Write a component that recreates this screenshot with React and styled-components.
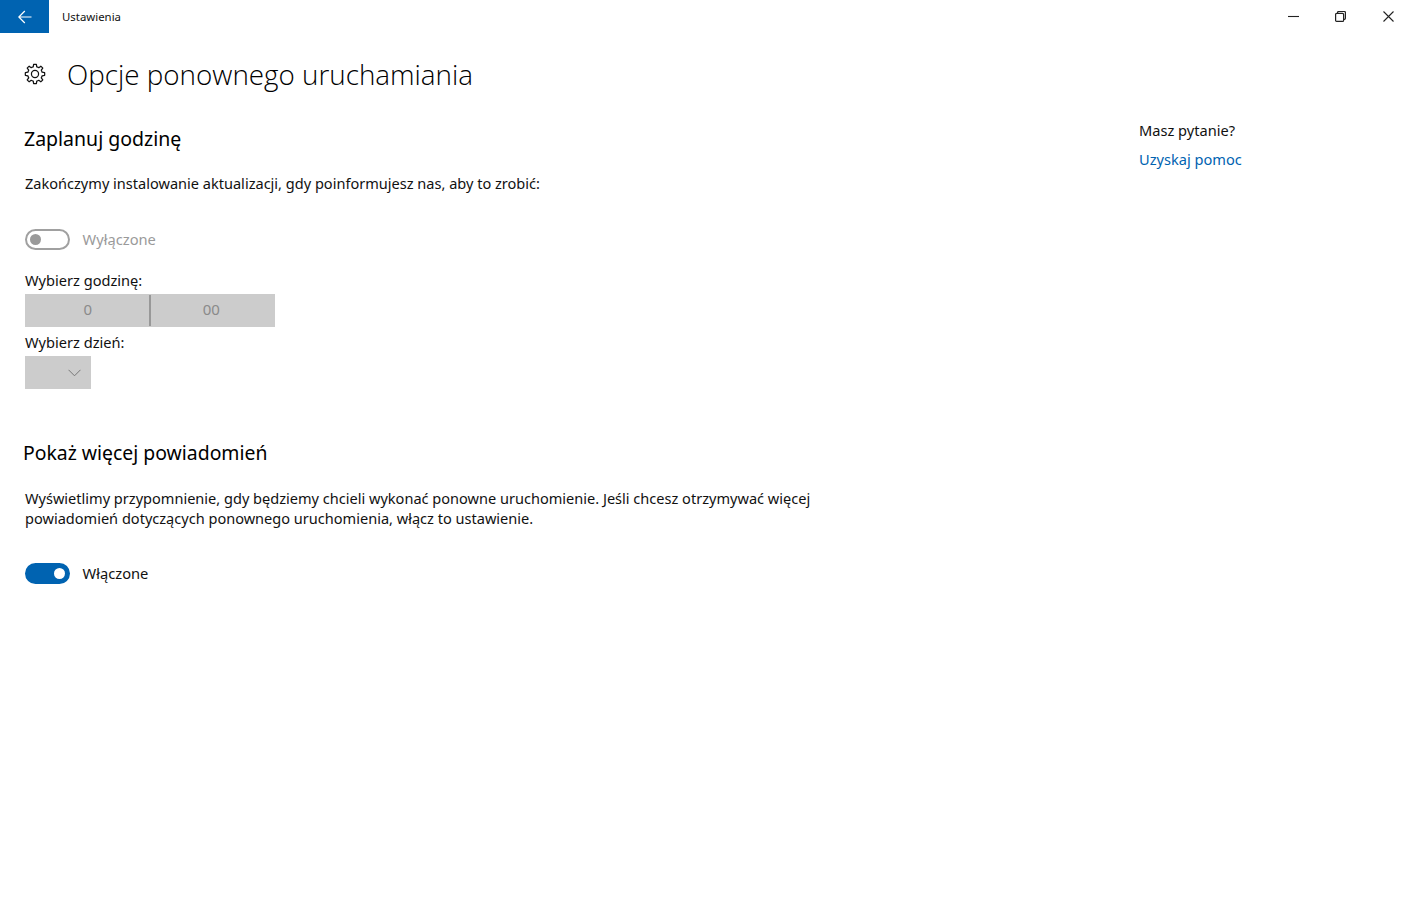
import React from "react";
import styled, { createGlobalStyle } from "styled-components";

const Global = createGlobalStyle`
  html, body { margin: 0; padding: 0; background: #fff; }
  body { font-family: "Noto Sans", "Open Sans", "Liberation Sans", sans-serif; color: #000; }
`;

const Window = styled.div`
  width: 1412px; height: 900px; display: flex; flex-direction: column; overflow: hidden; background: #fff;
`;
const TitleBar = styled.header`
  height: 33px; display: flex; align-items: center; flex: none;
`;
const BackButton = styled.div`
  width: 49px; height: 33px; background: #0063b1; display: flex; align-items: center; justify-content: center;
  svg { display: block; }
`;
const AppName = styled.span`
  font-size: 11.4px; margin-left: 13px; color: #111; flex: 1;
`;
const WinControls = styled.div`
  display: flex;
`;
const WinButton = styled.div`
  width: 47.5px; height: 33px; display: flex; align-items: center; justify-content: center;
`;
const Body = styled.div`
  flex: 1; display: flex; justify-content: space-between;
`;
const Main = styled.main`
  padding-left: 25px; display: flex; flex-direction: column; width: 820px;
`;
const PageHeading = styled.div`
  display: flex; align-items: center; margin-top: 20px; height: 42px;
`;
const GearWrap = styled.div`
  width: 42px; margin-left: -1px; display: flex; align-items: center; svg { display: block; }
`;
const PageTitle = styled.h1`
  margin: 0 0 0 1px; font-size: 27.8px; font-weight: 300; font-family: "Open Sans", sans-serif; white-space: nowrap;
`;
const SectionTitle = styled.h2`
  margin: ${p => p.$top}px 0 0 ${p => p.$shift || 0}px; font-size: ${p => p.$size || 19.5}px; font-weight: 400; line-height: 28px; white-space: nowrap;
`;
const Paragraph = styled.p`
  margin: ${p => p.$top}px 0 0; font-size: 14.55px; line-height: 20px; color: #111; width: ${p => p.$w || "auto"};
`;
const ToggleRow = styled.div`
  display: flex; align-items: center; margin-top: ${p => p.$top}px; height: 22px;
`;
const Toggle = styled.div`
  width: 45px; height: 21px; box-sizing: border-box; border-radius: 11px; display: flex; align-items: center; padding: 0 3px;
  justify-content: ${p => p.$on ? "flex-end" : "flex-start"};
  background: ${p => p.$on ? "#0063b1" : "#fff"};
  border: 2px solid ${p => p.$on ? "#0063b1" : "#a0a0a0"};
`;
const Knob = styled.div`
  width: 11px; height: 11px; border-radius: 50%; background: ${p => p.$on ? "#fff" : "#9a9a9a"};
`;
const ToggleLabel = styled.span`
  margin-left: 12.5px; font-size: 14.7px; color: ${p => p.$on ? "#111" : "#9a9a9a"};
`;
const FieldLabel = styled.div`
  font-size: 14.6px; line-height: 20px; color: #111; margin-top: ${p => p.$top}px;
`;
const TimePicker = styled.div`
  display: flex; width: 250px; height: 33px; background: #cccccc; margin-top: 4px; align-items: center;
`;
const TimeCell = styled.div`
  flex: 1; box-sizing: border-box; text-align: center; font-size: 15px; line-height: 20px; color: #8a8a8a;
  padding-bottom: 3px;
  padding-left: ${p => p.$lead || 0}px;
  padding-right: ${p => p.$trim || 0}px;
`;
const TimeDivider = styled.div`
  width: 2px; height: 31px; background: #989898;
`;
const DaySelect = styled.div`
  width: 66px; height: 33px; background: #cccccc; margin-top: 4px; display: flex; align-items: center; justify-content: flex-end; padding-right: 10px; box-sizing: border-box;
  svg { display: block; }
`;
const Aside = styled.aside`
  width: 273px; padding-top: 87px; display: flex; flex-direction: column;
`;
const AsideTitle = styled.div`
  font-size: 14.6px; line-height: 20px; color: #111;
`;
const HelpLink = styled.a`
  font-size: 14.6px; line-height: 20px; color: #0063b1; margin-top: 9px; text-decoration: none;
`;

const gearPath = (() => {
  const teeth = 8, cx = 12, cy = 12, R = 10.6, r = 8;
  const pts = [];
  for (let i = 0; i < teeth; i++) {
    const a = (i / teeth) * Math.PI * 2 - Math.PI / 2;
    const w = Math.PI / teeth;
    const at = (rad, ang) => `${(cx + rad * Math.cos(ang)).toFixed(2)} ${(cy + rad * Math.sin(ang)).toFixed(2)}`;
    pts.push(`${i === 0 ? "M" : "L"}${at(r, a - w * 0.62)}`);
    pts.push(`L${at(R, a - w * 0.36)}`);
    pts.push(`A${R} ${R} 0 0 1 ${at(R, a + w * 0.36)}`);
    pts.push(`L${at(r, a + w * 0.62)}`);
    pts.push(`A${r} ${r} 0 0 1 ${at(r, a + w * 1.38)}`);
  }
  return pts.join(" ") + "Z";
})();

export default function App() {
  return (
    <Window>
      <Global />
      <TitleBar>
        <BackButton>
          <svg width="14" height="14" viewBox="0 0 14 14" fill="none" stroke="#fff" strokeWidth="1.2">
            <path d="M0.8 7H13.5M6.8 1L0.8 7l6 6" />
          </svg>
        </BackButton>
        <AppName>Ustawienia</AppName>
        <WinControls>
          <WinButton>
            <svg width="11" height="11" viewBox="0 0 11 11" fill="none" stroke="#222" strokeWidth="1.1"><path d="M0 5.5h11" /></svg>
          </WinButton>
          <WinButton>
            <svg width="11" height="11" viewBox="0 0 11 11" fill="none" stroke="#222" strokeWidth="1.2">
              <rect x="0.6" y="2.4" width="8" height="8" rx="1" />
              <path d="M2.6 2.4V1.5a1 1 0 0 1 1-1h5.8a1 1 0 0 1 1 1v5.8a1 1 0 0 1-1 1h-.8" />
            </svg>
          </WinButton>
          <WinButton>
            <svg width="11" height="11" viewBox="0 0 11 11" fill="none" stroke="#222" strokeWidth="1.1"><path d="M.5.5l10 10M10.5.5l-10 10" /></svg>
          </WinButton>
        </WinControls>
      </TitleBar>
      <Body>
        <Main>
          <PageHeading>
            <GearWrap>
              <svg width="22" height="22" viewBox="0 0 24 24" fill="none" stroke="#111" strokeWidth="1.35" strokeLinejoin="round">
                <path d={gearPath} />
                <circle cx="12" cy="12" r="3.9" />
              </svg>
            </GearWrap>
            <PageTitle>Opcje ponownego uruchamiania</PageTitle>
          </PageHeading>
          <SectionTitle $top={30} $shift={-1}>Zaplanuj godzinę</SectionTitle>
          <Paragraph $top={20}>Zakończymy instalowanie aktualizacji, gdy poinformujesz nas, aby to zrobić:</Paragraph>
          <ToggleRow $top={35}>
            <Toggle><Knob /></Toggle>
            <ToggleLabel>Wyłączone</ToggleLabel>
          </ToggleRow>
          <FieldLabel $top={20}>Wybierz godzinę:</FieldLabel>
          <TimePicker>
            <TimeCell $lead={2}>0</TimeCell>
            <TimeDivider />
            <TimeCell $trim={3}>00</TimeCell>
          </TimePicker>
          <FieldLabel $top={5}>Wybierz dzień:</FieldLabel>
          <DaySelect>
            <svg width="13" height="8" viewBox="0 0 13 8" fill="none" stroke="#777" strokeWidth="1"><path d="M.5.8l6 6 6-6" /></svg>
          </DaySelect>
          <SectionTitle $top={50} $shift={-2} $size={19.4}>Pokaż więcej powiadomień</SectionTitle>
          <Paragraph $top={21} $w="800px">Wyświetlimy przypomnienie, gdy będziemy chcieli wykonać ponowne uruchomienie. Jeśli chcesz otrzymywać więcej powiadomień dotyczących ponownego uruchomienia, włącz to ustawienie.</Paragraph>
          <ToggleRow $top={34}>
            <Toggle $on><Knob $on /></Toggle>
            <ToggleLabel $on>Włączone</ToggleLabel>
          </ToggleRow>
        </Main>
        <Aside>
          <AsideTitle>Masz pytanie?</AsideTitle>
          <HelpLink>Uzyskaj pomoc</HelpLink>
        </Aside>
      </Body>
    </Window>
  );
}
